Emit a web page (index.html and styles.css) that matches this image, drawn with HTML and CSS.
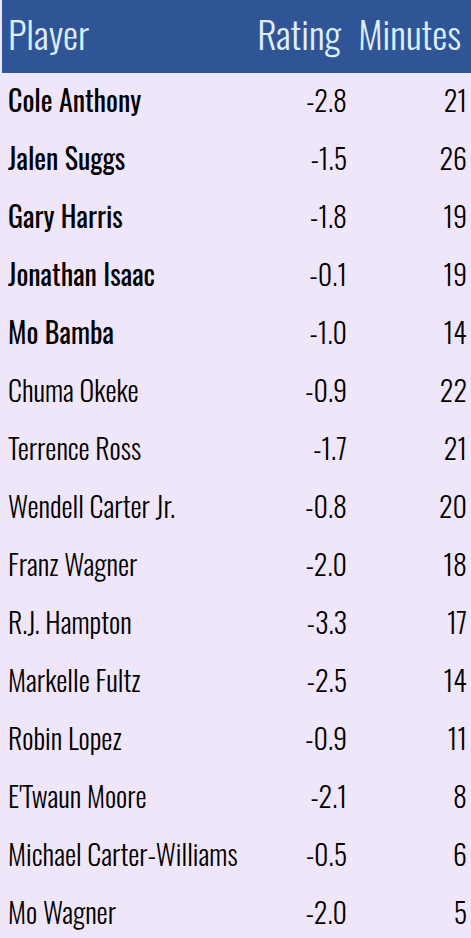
FILE: index.html
```html
<!DOCTYPE html>
<html>
<head>
<meta charset="utf-8">
<link rel="stylesheet" href="styles.css">
</head>
<body>
<div class="table">
  <div class="row head">
    <div class="cell name">Player</div>
    <div class="cell num">Rating</div>
    <div class="cell num">Minutes</div>
  </div>
  <div class="row starter"><div class="cell name">Cole Anthony</div><div class="cell num">-2.8</div><div class="cell num">21</div></div>
  <div class="row starter"><div class="cell name">Jalen Suggs</div><div class="cell num">-1.5</div><div class="cell num">26</div></div>
  <div class="row starter"><div class="cell name">Gary Harris</div><div class="cell num">-1.8</div><div class="cell num">19</div></div>
  <div class="row starter"><div class="cell name">Jonathan Isaac</div><div class="cell num">-0.1</div><div class="cell num">19</div></div>
  <div class="row starter"><div class="cell name">Mo Bamba</div><div class="cell num">-1.0</div><div class="cell num">14</div></div>
  <div class="row"><div class="cell name">Chuma Okeke</div><div class="cell num">-0.9</div><div class="cell num">22</div></div>
  <div class="row"><div class="cell name">Terrence Ross</div><div class="cell num">-1.7</div><div class="cell num">21</div></div>
  <div class="row"><div class="cell name">Wendell Carter Jr.</div><div class="cell num">-0.8</div><div class="cell num">20</div></div>
  <div class="row"><div class="cell name">Franz Wagner</div><div class="cell num">-2.0</div><div class="cell num">18</div></div>
  <div class="row"><div class="cell name">R.J. Hampton</div><div class="cell num">-3.3</div><div class="cell num">17</div></div>
  <div class="row"><div class="cell name">Markelle Fultz</div><div class="cell num">-2.5</div><div class="cell num">14</div></div>
  <div class="row"><div class="cell name">Robin Lopez</div><div class="cell num">-0.9</div><div class="cell num">11</div></div>
  <div class="row"><div class="cell name">E'Twaun Moore</div><div class="cell num">-2.1</div><div class="cell num">8</div></div>
  <div class="row"><div class="cell name">Michael Carter-Williams</div><div class="cell num">-0.5</div><div class="cell num">6</div></div>
  <div class="row"><div class="cell name">Mo Wagner</div><div class="cell num">-2.0</div><div class="cell num">5</div></div>
</div>
</body>
</html>
```
FILE: styles.css
```css
html, body {
  margin: 0;
  padding: 0;
  background: #f0e6fa;
}
body {
  font-family: "Oswald", "Liberation Sans Narrow", sans-serif;
  color: #000;
}
.table {
  padding-left: 2px;
  display: flex;
  flex-direction: column;
}
.row {
  display: grid;
  grid-template-columns: 1fr 101px 120px;
  padding: 0 4px 6px 6px;
  height: 58px;
  box-sizing: border-box;
  align-items: center;
  font-size: 28px;
  font-weight: 300;
  white-space: nowrap;
}
.row.starter .name {
  font-weight: 400;
}
.row.head {
  height: 73px;
  background: #2f5597;
  color: #ddeeff;
  font-size: 38px;
  font-weight: 300;
  padding-right: 10px;
  padding-bottom: 7px;
}
.row.head .name {
  font-weight: 300;
}
.cell.num {
  text-align: right;
}
```
